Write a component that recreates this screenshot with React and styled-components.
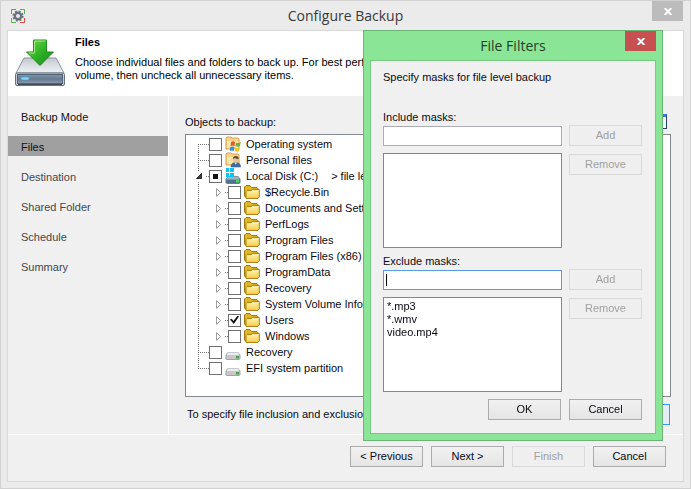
import React from "react";
import styled, { createGlobalStyle, css } from "styled-components";

const Global = createGlobalStyle`
  *, *::before, *::after { box-sizing: border-box; }
  body { margin: 0; background: #ebebeb; }
  body, button, input, select { font: 11px/13px "Liberation Sans", Arial, sans-serif; color: #0a0a14; }
  h1, h2, h3, p, ul { margin: 0; padding: 0; font-weight: normal; }
`;

const Window = styled.main`
  position: relative;
  display: flex;
  flex-direction: column;
  min-height: 100vh;
  padding: 0 7px 6px;
  border: 1px solid #d2d2d2;
  background: #ebebeb;
`;

const TitleBar = styled.header`
  display: grid;
  grid-template-columns: 40px 1fr 40px;
  align-items: center;
  height: 29px;
`;

const WindowTitle = styled.h1`
  text-align: center;
  font: 14px/22px "Open Sans", "Noto Sans", sans-serif;
  color: #3a3a3a;
`;

const AppIcon = styled.svg`
  margin-left: 3px;
`;

const CloseButton = styled.button`
  display: flex;
  align-items: center;
  justify-content: center;
  align-self: start;
  justify-self: end;
  width: 31px;
  height: 20px;
  padding: 0;
  border: 0;
  background: ${(p) => (p.$active ? "#c75050" : "#bcbcbc")};
`;

const Frame = styled.div`
  display: flex;
  flex: 1;
  flex-direction: column;
  margin: 0 -1px;
  border: 1px solid #d9d9d9;
  background: #f0f0f0;
`;

const Banner = styled.section`
  display: flex;
  gap: 9px;
  height: 65px;
  padding: 5px 6px 0;
  background: #fff;
  white-space: nowrap;
  overflow: hidden;
`;

const BannerText = styled.div`
  color: #000;
`;

const BannerTitle = styled.h2`
  margin-bottom: 7px;
  font-size: 11px;
  line-height: 13px;
  font-weight: bold;
`;

const Body = styled.div`
  display: grid;
  grid-template-columns: 161px 1fr;
  flex: 1;
  border-bottom: 1px solid #fff;
`;

const Steps = styled.nav`
  display: flex;
  flex-direction: column;
  gap: 10px;
  padding-top: 10px;
  border-right: 1px solid #fff;
`;

const Step = styled.a`
  height: 20px;
  padding-left: 13px;
  line-height: 22px;
  text-decoration: none;
  color: ${(p) => (p.$state === "next" ? "#46464c" : "#111118")};
  background: ${(p) => (p.$state === "current" ? "#a0a0a0" : "transparent")};
`;

const Content = styled.section`
  display: flex;
  flex-direction: column;
  padding: 18px 12px 9px 16px;
  min-width: 0;
`;

const ObjectsHeader = styled.div`
  display: flex;
  align-items: flex-end;
  justify-content: space-between;
  height: 15px;
  margin-bottom: 5px;
  padding-right: 4px;
`;

const RefreshButton = styled.button`
  width: 15px;
  height: 15px;
  padding: 0;
  border: 1px solid #25406f;
  border-top: 3px solid #3b7be0;
  background: #f4f7fb;
`;

const Tree = styled.ul`
  flex: 1;
  padding-top: 1px;
  border: 1px solid #828790;
  background: #fff;
  list-style: none;
  overflow: hidden;
`;

const TreeRow = styled.li`
  display: flex;
  align-items: center;
  height: 16px;
  padding-left: 4px;
  white-space: nowrap;
`;

const Guide = styled.svg`
  flex: none;
`;

const TreeLabel = styled.label`
  display: flex;
  align-items: center;
  height: 16px;
`;

const Check = styled.input.attrs({ type: "checkbox" })`
  appearance: none;
  display: grid;
  place-items: center;
  width: 13px;
  height: 13px;
  margin: 0 3px 0 0;
  border: 1px solid #707070;
  background: #fff;

  &::before {
    content: "";
    width: 9px;
    height: 9px;
    background: #111;
    clip-path: polygon(0 45%, 20% 35%, 38% 60%, 85% 0, 100% 12%, 42% 95%);
    visibility: hidden;
  }

  &:checked::before { visibility: visible; }

  ${(p) => p.$mixed && css`
    &::before {
      width: 5px;
      height: 5px;
      clip-path: none;
      visibility: visible;
    }
  `}
`;

const RowIcon = styled.svg`
  margin-right: 5px;
`;

const RowNote = styled.span`
  margin-left: 13px;
`;

const FilterRow = styled.div`
  display: flex;
  align-items: center;
  gap: 8px;
  margin-top: 7px;
  padding: 0 1px 0 2px;
`;

const FilterHint = styled.p`
  flex: 1;
  min-width: 0;
  overflow: hidden;
  white-space: nowrap;
`;

const Button = styled.button`
  flex: none;
  width: 73px;
  height: 21px;
  padding: 0;
  border: 1px solid ${(p) => (p.$focus ? "#3399ff" : "#acacac")};
  background: ${(p) => (p.$focus ? "#e5eef8" : "linear-gradient(#f1f1f1, #e5e5e5)")};

  &:disabled {
    border-color: #d9d9d9;
    background: #efefef;
    color: #a0a0a0;
  }
`;

const ButtonRow = styled.div`
  display: flex;
  justify-content: flex-end;
  gap: 8px;
`;

const Footer = styled(ButtonRow)`
  height: 46px;
  padding: 11px 17px 0;
`;

const Dialog = styled.section`
  position: absolute;
  top: 29px;
  right: 27px;
  width: 300px;
  padding: 0 6px 6px;
  border: 1px solid #69b574;
  background: #8ae696;
`;

const DialogBar = styled.header`
  display: grid;
  grid-template-columns: 40px 1fr 40px;
  height: 29px;
  align-items: center;
`;

const DialogTitle = styled(WindowTitle).attrs({ as: "h2" })`
  color: #24402a;
`;

const DialogBody = styled.form`
  padding: 10px 13px 13px 12px;
  border: 1px solid #75c980;
  background: #f0f0f0;
`;

const MaskGroup = styled.fieldset`
  min-width: 0;
  margin: 0;
  padding: 0;
  border: 0;

  & + & { margin-top: 7px; }
`;

const MaskGrid = styled.div`
  display: grid;
  grid-template-columns: 1fr 73px;
  gap: 7px;
  margin-top: 1px;
`;

const MaskInput = styled.input`
  min-width: 0;
  width: 100%;
  height: 20px;
  align-self: end;
  padding: 0 2px;
  border: 1px solid #abadb3;
  border-radius: 0;
  background: #fff;
  outline: none;

  ${(p) => p.$active && css`
    border-color: #569de5;
    caret-color: transparent;

    &:placeholder-shown {
      background: linear-gradient(#000, #000) 2px 3px / 1px 12px no-repeat #fff;
    }
  `}
`;

const MaskList = styled.ul`
  height: 95px;
  padding: 2px 3px;
  border: 1px solid #828790;
  background: #fff;
  list-style: none;
`;

const Intro = styled.p`
  margin-bottom: 27px;
`;

const SideButton = styled(Button)`
  margin-top: ${(p) => (p.$beside === "list" ? "1px" : "0")};
`;

const Actions = styled(ButtonRow)`
  margin-top: 7px;
`;

function Cross() {
  return (
    <svg width="8" height="7" viewBox="0 0 8 7" aria-hidden="true">
      <path d="M.7 0 7.3 7M7.3 0 .7 7" stroke="#fff" strokeWidth="2" />
    </svg>
  );
}

function DriveDownload() {
  return (
    <svg width="52" height="50" viewBox="0 0 52 50" aria-hidden="true">
      <defs>
        <linearGradient id="top" x2="0" y2="1"><stop stopColor="#c4c9d0" /><stop offset="1" stopColor="#f0f2f4" /></linearGradient>
        <linearGradient id="front" x2="0" y2="1"><stop stopColor="#8496ab" /><stop offset=".5" stopColor="#65788f" /><stop offset="1" stopColor="#8e9bab" /></linearGradient>
        <linearGradient id="arrow" x2="1" y2="1"><stop stopColor="#70dc4c" /><stop offset=".5" stopColor="#2fb327" /><stop offset="1" stopColor="#15871a" /></linearGradient>
      </defs>
      <path d="M10 22H42L50 37H2Z" fill="url(#top)" stroke="#8b939e" />
      <rect x="1.5" y="37" width="49" height="12.5" rx="1.5" fill="#c6ccd4" stroke="#66717f" />
      <rect x="3.5" y="38.5" width="45" height="9" fill="url(#front)" stroke="#536377" />
      <path d="M4 48.5H48" stroke="#404d5d" />
      <rect x="7" y="41" width="8" height="3" rx="1" fill="#7edcff" stroke="#3e9cd2" strokeWidth=".7" />
      <path d="M19.5 4H32.5V16H39.5L26 29.5 12.5 16H19.5Z" fill="url(#arrow)" stroke="#258a20" />
      <path d="M20.5 5H31.5M20.5 5V17H15" fill="none" stroke="#a3ed83" />
    </svg>
  );
}

function ProductIcon() {
  return (
    <AppIcon width="14" height="14" viewBox="0 0 14 14" aria-hidden="true">
      <path d="M.5 5V.5H5" fill="none" stroke="#5b8acb" />
      <path d="M9 .5H13.5V5M.5 9V13.5H5" fill="none" stroke="#4fb848" />
      <path d="M13.5 9V13.5H9" fill="none" stroke="#df4b3f" />
      <circle cx="7" cy="7" r="3.2" fill="none" stroke="#68737e" strokeWidth="2.4" />
      <circle cx="7" cy="7" r="4.7" fill="none" stroke="#68737e" strokeWidth="1.8" strokeDasharray="2 1.69" />
    </AppIcon>
  );
}

function FolderShape({ pale }) {
  return (
    <g>
      <path d={pale ? "M1 13V2L2 1H6L7 2H13L14 3V13Z" : "M.5 12V3L2 1.5H6L7.5 3.5H13L14 5V13H1.5Z"} fill={pale ? "#f8d48a" : "#e4b61d"} stroke={pale ? "#d9a04b" : "#a2770b"} />
      {!pale && <path d="M2 14V7.5L3 6.5H7L8.5 5.5H15.3V13L14 14.4H2Z" fill="url(#folder)" stroke="#a97d0e" />}
      {pale && <path d="M2 12V5H13V12Z" fill="#ffe6ab" />}
    </g>
  );
}

function DriveShape({ y = 0, windows }) {
  return (
    <g transform={`translate(0 ${y})`}>
      <path d="M3 7H13L15.5 10V14L14 15H2L.5 14V10Z" fill={windows ? "#687d90" : "#a2a3a8"} />
      <path d="M3 7.5H13L14.5 10.5H1.5Z" fill={windows ? "#a5b0bb" : "#ececef"} />
      <path d="M1.5 11H14.5V14H1.5Z" fill={windows ? "#4c7394" : "#c6c6cb"} />
      <rect x="11" y="11" width="3" height="2.5" fill={windows ? "#48d758" : "#4fa052"} />
    </g>
  );
}

function ObjectIcon({ kind }) {
  return (
    <RowIcon width="16" height="16" viewBox="0 0 16 16" aria-hidden="true">
      <defs>
        <linearGradient id="folder" x2="0" y2="1"><stop stopColor="#fff5b4" /><stop offset="1" stopColor="#f6cd48" /></linearGradient>
      </defs>
      {kind === "folder" && <FolderShape />}
      {kind === "drive" && <DriveShape y={1} />}
      {kind === "system" && (
        <g>
          <FolderShape pale />
          <path d="M6 6Q8 4.5 10 6L9.5 10Q7.5 9 5.5 10Z" fill="#e9562a" />
          <path d="M11 6.5Q13.5 8 15.8 6L15 10Q13 11.5 10.5 10Z" fill="#65b447" />
          <path d="M5.3 11Q7.5 10 9.3 11L8.8 15Q7 14 5 15Z" fill="#348edb" />
          <path d="M10.3 11.5Q12.5 13 14.8 11.5L14 15Q12 16.5 9.8 15Z" fill="#f6c329" />
        </g>
      )}
      {kind === "personal" && (
        <g>
          <FolderShape pale />
          <path d="M6 15Q6 10.5 10.8 10.5T15.6 15Z" fill="#3d6ea9" stroke="#2b4e79" strokeWidth=".5" />
          <circle cx="10.8" cy="7.5" r="2.8" fill="#ecc195" />
          <path d="M7.8 7Q8 4 10.8 4T13.8 7Q11 7 10 6Z" fill="#5a4a39" />
          <path d="m9.5 10.5 1.3 2 1.3-2Z" fill="#fff" />
        </g>
      )}
      {kind === "windows" && (
        <g>
          <DriveShape y={1} windows />
          <path d="M1 0H4.3V4H1ZM5 0H9V4H5ZM1 5H4.3V9H1ZM5 5H9V9H5Z" fill="#08c4f7" />
        </g>
      )}
    </RowIcon>
  );
}

const dots = { stroke: "#777", strokeDasharray: "1 1" };

function RootGuide({ line }) {
  return (
    <Guide width="19" height="16" viewBox="0 0 19 16" aria-hidden="true">
      {line === "first" && <path d="M8.5 8V16M8 8.5H19" fill="none" {...dots} />}
      {line === "middle" && <path d="M8.5 0V16M8 8.5H19" fill="none" {...dots} />}
      {line === "last" && <path d="M8.5 0V8M8 8.5H19" fill="none" {...dots} />}
      {line === "through" && <path d="M8.5 0V16" {...dots} />}
      {line === "open" && (
        <g>
          <path d="M8.5 0V3M8.5 14V16M16 8.5H19" {...dots} />
          <path d="M6.5 10.5H11.5V5.5Z" fill="#404040" stroke="#262626" />
        </g>
      )}
    </Guide>
  );
}

function ClosedExpander() {
  return (
    <Guide width="19" height="16" viewBox="0 0 19 16" aria-hidden="true">
      <path d="M7.5 4.5 11.5 8.5 7.5 12.5Z" fill="#fff" stroke="#a0a0a0" />
      <path d="M16 8.5H19" {...dots} />
    </Guide>
  );
}

const folders = [
  "$Recycle.Bin",
  "Documents and Settings",
  "PerfLogs",
  "Program Files",
  "Program Files (x86)",
  "ProgramData",
  "Recovery",
  "System Volume Information",
  "Users",
  "Windows",
];

const objects = [
  { name: "Operating system", kind: "system", line: "first" },
  { name: "Personal files", kind: "personal", line: "middle" },
  { name: "Local Disk (C:)", kind: "windows", line: "open", mixed: true, note: "> file level" },
  ...folders.map((name) => ({ name, kind: "folder", line: "through", child: true, checked: name === "Users" })),
  { name: "Recovery", kind: "drive", line: "middle" },
  { name: "EFI system partition", kind: "drive", line: "last" },
];

function ObjectRow({ item }) {
  return (
    <TreeRow>
      <RootGuide line={item.line} />
      {item.child && <ClosedExpander />}
      <TreeLabel>
        <Check
          defaultChecked={item.checked}
          $mixed={item.mixed}
          ref={(el) => { if (el) el.indeterminate = Boolean(item.mixed); }}
        />
        <ObjectIcon kind={item.kind} />
        {item.name}
        {item.note && <RowNote>{item.note}</RowNote>}
      </TreeLabel>
    </TreeRow>
  );
}

function Masks({ id, label, items, active }) {
  return (
    <MaskGroup>
      <label htmlFor={id}>{label}</label>
      <MaskGrid>
        <MaskInput id={id} type="text" placeholder=" " $active={active} autoFocus={active} />
        <SideButton type="button" disabled>Add</SideButton>
        <MaskList aria-label={label}>
          {items.map((mask) => <li key={mask}>{mask}</li>)}
        </MaskList>
        <SideButton type="button" disabled $beside="list">Remove</SideButton>
      </MaskGrid>
    </MaskGroup>
  );
}

const steps = [
  ["Backup Mode", "done"],
  ["Files", "current"],
  ["Destination", "next"],
  ["Shared Folder", "next"],
  ["Schedule", "next"],
  ["Summary", "next"],
];

export default function App() {
  return (
    <>
      <Global />
      <Window>
        <TitleBar>
          <ProductIcon />
          <WindowTitle>Configure Backup</WindowTitle>
          <CloseButton aria-label="Close window"><Cross /></CloseButton>
        </TitleBar>
        <Frame>
          <Banner>
            <DriveDownload />
            <BannerText>
              <BannerTitle>Files</BannerTitle>
              <p>
                Choose individual files and folders to back up. For best performance, select the entire
                <br />
                volume, then uncheck all unnecessary items.
              </p>
            </BannerText>
          </Banner>
          <Body>
            <Steps>
              {steps.map(([name, state]) => (
                <Step key={name} href="#" $state={state} aria-current={state === "current" ? "step" : undefined}>{name}</Step>
              ))}
            </Steps>
            <Content>
              <ObjectsHeader>
                <span>Objects to backup:</span>
                <RefreshButton aria-label="Refresh" />
              </ObjectsHeader>
              <Tree>
                {objects.map((item, i) => <ObjectRow key={i} item={item} />)}
              </Tree>
              <FilterRow>
                <FilterHint>To specify file inclusion and exclusion masks, click Filters</FilterHint>
                <Button $focus>Filters</Button>
              </FilterRow>
            </Content>
          </Body>
          <Footer>
            <Button>&lt; Previous</Button>
            <Button>Next &gt;</Button>
            <Button disabled>Finish</Button>
            <Button>Cancel</Button>
          </Footer>
        </Frame>
        <Dialog role="dialog" aria-label="File Filters">
          <DialogBar>
            <span />
            <DialogTitle>File Filters</DialogTitle>
            <CloseButton $active aria-label="Close dialog"><Cross /></CloseButton>
          </DialogBar>
          <DialogBody>
            <Intro>Specify masks for file level backup</Intro>
            <Masks id="include" label="Include masks:" items={[]} />
            <Masks id="exclude" label="Exclude masks:" items={["*.mp3", "*.wmv", "video.mp4"]} active />
            <Actions>
              <Button type="button">OK</Button>
              <Button type="button">Cancel</Button>
            </Actions>
          </DialogBody>
        </Dialog>
      </Window>
    </>
  );
}
